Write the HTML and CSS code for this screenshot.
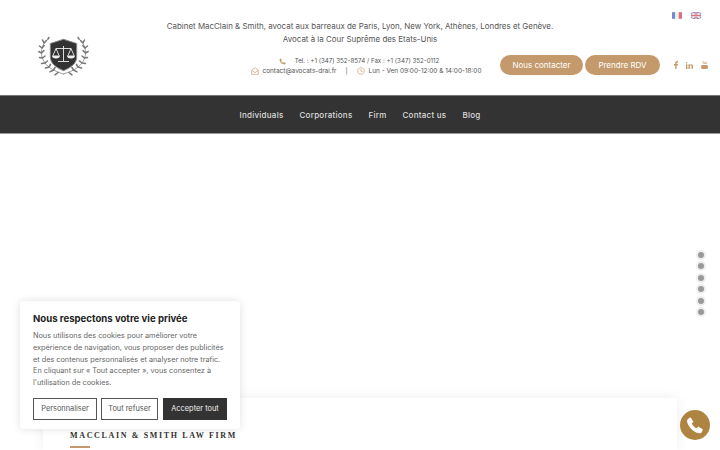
FILE: index.html
```html
<!DOCTYPE html>
<html lang="fr">
<head>
<meta charset="utf-8">
<title>MacClain &amp; Smith</title>
<link rel="stylesheet" href="styles.css">
</head>
<body>
<header class="top">
  <a class="logo" href="#">
    <svg width="52" height="42" viewBox="0 0 52 42">
      <g id="wreath" fill="none" stroke="#757575" stroke-width="1.500" stroke-linecap="round">
        <path stroke-width=".7" d="M10.500 2.500C5 7 3.500 12 3.500 17c0 6 3.500 11 8 14.500 4 3 9 5 14 6.500"/>
        <path d="M10 3l1-1.500M6 7L4.500 4M4 12L1.500 10M3.500 17L.8 15.500M4.500 22l-3-.5M7 27l-3.500.5M11 31l-3.500 1M15.500 34L12 35.800M20 36.500l-3 2.300M6 7l2.500-2.500M4 12l2.200-2.500M3.500 17L6 14.500M4.500 22L7 20M7 27l2.500-2M11 31l1.500-2.500M15.500 34l1.500-2.500"/>
      </g>
      <use href="#wreath" transform="matrix(-1 0 0 1 51 0)"/>
      <path d="M25.500 3.300l13.200 4.200V21c0 7-7 11-13.200 13.700C19.300 32 12.300 28 12.300 21V7.500z" fill="#333" stroke="#8a8a8a" stroke-width="1"/>
      <path d="M25.500 10v15M20 25.500h11M18 12.500h15M18 12.500l-3 7M18 12.500l3 7M33 12.500l-3 7M33 12.500l3 7" fill="none" stroke="#eee" stroke-width=".9"/>
      <path d="M14 19.500h8a4 3 0 0 1-8 0zM29 19.500h8a4 3 0 0 1-8 0z" fill="#eee"/>
    </svg>
  </a>
  <div class="intro">
    <p class="tagline">Cabinet MacClain &amp; Smith, avocat aux barreaux de Paris, Lyon, New York, Athènes, Londres et Genève.</p>
    <p class="tagline">Avocat à la Cour Suprême des Etats-Unis</p>
  </div>
  <div class="flags">
    <svg width="10" height="7" viewBox="0 0 3 2"><path fill="#6d8cc8" d="M0 0h1v2H0z"/><path fill="#f3eeee" d="M1 0h1v2H1z"/><path fill="#d9727a" d="M2 0h1v2H2z"/></svg>
    <svg width="10" height="7" viewBox="0 0 10 7"><path fill="#7d83b8" d="M0 0h10v7H0z"/><path stroke="#f0e4e6" stroke-width="1.400" d="M0 0l10 7M10 0L0 7"/><path stroke="#f0e4e6" stroke-width="2.400" d="M5 0v7M0 3.500h10"/><path stroke="#d7737f" stroke-width="1.200" d="M5 0v7M0 3.500h10"/></svg>
  </div>
  <div class="contacts">
    <p class="contact-line line-tel">
      <svg class="ic ic-tel" viewBox="0 0 24 24" width="7" height="7"><path fill="#c49a6c" d="M6 1l4 6-2.500 2.500c1 3 4 6 7 7L17 14l6 4-2 4c-9 1-20-9-19-17z"/></svg>
      <span>Tel. : +1 (347) 352-8574 / Fax : +1 (347) 352-0112</span>
    </p>
    <p class="contact-line">
      <svg class="ic" viewBox="0 0 24 24" width="8" height="8"><path fill="none" stroke="#c49a6c" stroke-width="2" d="M2 10l10-8 10 8v12H2zM2 10l10 7 10-7"/></svg>
      <span>contact@avocats-drai.fr</span>
      <span class="sep">|</span>
      <svg class="ic" viewBox="0 0 24 24" width="8" height="8"><path fill="none" stroke="#c49a6c" stroke-width="2" d="M12 2a10 10 0 1 0 .01 0zM12 6v7h5"/></svg>
      <span>Lun - Ven 09:00-12:00 &amp; 14:00-18:00</span>
    </p>
  </div>
  <div class="actions">
    <a class="pill pill-a" href="#">Nous contacter</a>
    <a class="pill pill-b" href="#">Prendre RDV</a>
    <div class="social">
      <svg width="4" height="8" viewBox="0 0 10 20"><path fill="#c49a6c" d="M3 20V11H0V7.500h3V5c0-3 2-5 4.500-5H10v3.500H8C7 3.500 6.500 4 6.500 5v2.500H10L9.500 11h-3v9z"/></svg>
      <svg width="7" height="7" viewBox="0 0 20 20"><path fill="#c49a6c" d="M0 6.500h4V20H0zM2 0a2.200 2.200 0 1 1 0 4.400A2.200 2.200 0 0 1 2 0zM7 6.500h4v2c1-1.500 2.500-2.400 4.500-2.400 3 0 4.500 2 4.500 5.400V20h-4v-8c0-1.800-.8-2.700-2.300-2.700S11 10.400 11 12v8H7z"/></svg>
      <svg width="7" height="8" viewBox="0 0 20 24"><path fill="#c49a6c" d="M3 12h14a3 3 0 0 1 3 3v6a3 3 0 0 1-3 3H3a3 3 0 0 1-3-3v-6a3 3 0 0 1 3-3zM5 0h2v9H5zM10 2h2v7h-2zM14 2h2v7h-2zM10 7h6v2h-6z"/></svg>
    </div>
  </div>
</header>
<nav class="menu">
  <a href="#">Individuals</a>
  <a href="#">Corporations</a>
  <a href="#">Firm</a>
  <a href="#">Contact us</a>
  <a href="#">Blog</a>
</nav>
<main class="hero">
  <section class="card">
    <h2>MACCLAIN &amp; SMITH LAW FIRM</h2>
    <div class="rule"></div>
  </section>
</main>
<ul class="dots"><li></li><li></li><li></li><li></li><li></li><li></li></ul>
<aside class="cookie">
  <h3>Nous respectons votre vie privée</h3>
  <p>Nous utilisons des cookies pour améliorer votre<br>expérience de navigation, vous proposer des publicités<br>et des contenus personnalisés et analyser notre trafic.<br>En cliquant sur « Tout accepter », vous consentez à<br>l'utilisation de cookies.</p>
  <div class="cookie-btns">
    <button class="btn btn-a">Personnaliser</button>
    <button class="btn btn-b">Tout refuser</button>
    <button class="btn btn-dark">Accepter tout</button>
  </div>
</aside>
<a class="call" href="#">
  <svg width="18" height="18" viewBox="0 0 24 24"><path fill="#fff" d="M6 1.500l4 6-2.300 2.500c1.300 3 3.300 5 6.300 6.300l2.500-2.300 6 4-1.500 3.500c-1 1.500-3 2-5 1.300C9.500 20.500 3.500 14.500 1.700 8.500 1 6.500 1.500 4.500 3 3.500z"/></svg>
</a>
</body>
</html>
```

FILE: styles.css
```css
* { box-sizing: border-box; }
html, body { margin: 0; height: 450px; overflow: hidden; background: #fff; }
body { font-family: Inter, "Open Sans", sans-serif; color: #555; position: relative; }
p { margin: 0; }
a { text-decoration: none; color: inherit; }

.top { height: 95px; display: grid; grid-template-columns: 128px 372px 220px; grid-template-rows: 53px 42px; }
.logo { grid-column: 1; grid-row: 1 / 3; margin: 36px 0 0 38px; }
.intro { grid-column: 1 / 4; grid-row: 1; padding-top: 20px; text-align: center; }
.tagline { font-size: 7.940px; line-height: 13px; color: #555; white-space: nowrap; }
.flags { grid-column: 3; grid-row: 1; justify-self: end; display: flex; gap: 9px; margin: 12px 19px 0 0; height: 7px; }
.flags svg { display: block; }
.contacts { grid-column: 1 / 4; grid-row: 2; padding: 3px 0 0 12px; }
.contact-line { font-size: 6.450px; line-height: 10px; display: flex; justify-content: center; align-items: center; gap: 4px; color: #555; white-space: nowrap; }
.line-tel { padding-right: 14px; font-size: 6.200px; }
.ic-tel { margin-right: 5px; }
.sep { margin: 0 5px; }
.actions { grid-column: 3; grid-row: 2; display: flex; align-items: center; height: 20px; margin-top: 2px; }
.pill { height: 20px; border-radius: 10px; background: #c49a6c; color: #fff; font-size: 8px; line-height: 20px; text-align: center; flex: none; }
.pill-a { width: 83px; }
.pill-b { width: 75px; margin-left: 2px; }
.social { display: flex; align-items: center; gap: 8px; margin-left: 14px; flex: none; }

.menu { height: 39px; background: #333; border-top: 1px solid #777; border-bottom: 1px solid #999; box-shadow: 0 1px 3px rgba(0,0,0,.06); display: flex; justify-content: center; align-items: center; gap: 16px; color: #ddd; font-size: 8px; font-weight: 500; letter-spacing: .25px; }

.hero { height: 316px; padding: 264px 43px 0; background: #fff; }
.card { height: 52px; background: #fff; box-shadow: 0 0 12px rgba(0,0,0,.07); padding: 31px 27px 0; }
.card h2 { margin: 0; font: bold 8px/14px "Liberation Serif", serif; letter-spacing: 1.650px; color: #333; }
.rule { width: 20px; height: 2px; background: #c49a6c; margin-top: 3px; }

.dots { position: absolute; left: 697.500px; top: 251.700px; margin: 0; padding: 0; list-style: none; }
.dots li { width: 6px; height: 6px; margin: 0 0 5.500px; border-radius: 50%; background: #999; box-shadow: 0 0 0 2px #eee; }

.cookie { position: absolute; left: 20px; top: 301px; width: 220px; height: 128px; background: #fff; border-radius: 3px; box-shadow: 0 0 8px rgba(0,0,0,.12); padding: 11px 13px; }
.cookie h3 { margin: 0; font-size: 9.600px; line-height: 13px; font-weight: 700; color: #222; }
.cookie p { margin-top: 5px; font-size: 7.300px; line-height: 11.800px; color: #666; white-space: nowrap; }
.cookie-btns { display: flex; gap: 4px; margin-top: 9px; }
.btn { height: 22px; padding: 0; background: #fff; border: 1.500px solid #555; color: #555; font: 7.400px Inter, sans-serif; flex: none; }
.btn-a { width: 64px; }
.btn-b { width: 57px; }
.btn-dark { width: 64px; margin-left: 1px; background: #333; border-color: #333; color: #eee; }

.call { position: absolute; left: 680px; top: 410px; width: 30px; height: 30px; border-radius: 50%; background: #ad8540; display: flex; align-items: center; justify-content: center; }
```
